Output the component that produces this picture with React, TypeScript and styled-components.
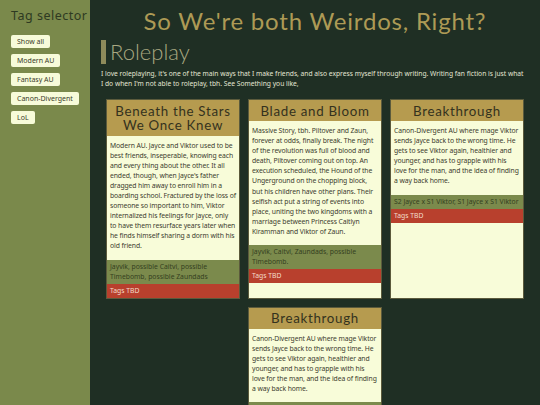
import React from 'react';
import styled, { createGlobalStyle } from 'styled-components';

const GlobalStyle = createGlobalStyle`
  html, body {
    margin: 0;
    padding: 0;
    height: 100%;
    overflow: hidden;
    background: #1f2f24;
    font-family: 'Noto Sans', 'Open Sans', sans-serif;
  }
  * { box-sizing: border-box; }
`;

const tags = ['Show all', 'Modern AU', 'Fantasy AU', 'Canon-Divergent', 'LoL'];

const stories = [
  {
    title: 'Beneath the Stars We Once Knew',
    body: "Modern AU. Jayce and Viktor used to be best friends, inseperable, knowing each and every thing about the other. It all ended, though, when Jayce's father dragged him away to enroll him in a boarding school. Fractured by the loss of someone so important to him, Viktor internalized his feelings for Jayce, only to have them resurface years later when he finds himself sharing a dorm with his old friend.",
    ships: 'Jayvik, possible Caitvi, possible Timebomb, possible Zaundads',
  },
  {
    title: 'Blade and Bloom',
    body: 'Massive Story, tbh. Piltover and Zaun, forever at odds, finally break. The night of the revolution was full of blood and death, Piltover coming out on top. An execution scheduled, the Hound of the Ungerground on the chopping block, but his children have other plans. Their selfish act put a string of events into place, uniting the two kingdoms with a marriage between Princess Caitlyn Kiramman and Viktor of Zaun.',
    ships: 'Jayvik, Caitvi, Zaundads, possible Timebomb.',
  },
  {
    title: 'Breakthrough',
    body: 'Canon-Divergent AU where mage Viktor sends Jayce back to the wrong time. He gets to see Viktor again, healthier and younger, and has to grapple with his love for the man, and the idea of finding a way back home.',
    ships: 'S2 Jayce x S1 Viktor, S1 Jayce x S1 Viktor',
  },
  {
    title: 'Breakthrough',
    body: 'Canon-Divergent AU where mage Viktor sends Jayce back to the wrong time. He gets to see Viktor again, healthier and younger, and has to grapple with his love for the man, and the idea of finding a way back home.',
    ships: 'S2 Jayce x S1 Viktor, S1 Jayce x S1 Viktor',
  },
];

export default function App() {
  return (
    <>
      <GlobalStyle />
      <Page>
        <Sidebar>
          <SideTitle>Tag selector</SideTitle>
          <TagList>
            {tags.map((t) => (
              <TagButton key={t}>{t}</TagButton>
            ))}
          </TagList>
        </Sidebar>
        <Main>
          <Title>So We're both Weirdos, Right?</Title>
          <Section>
            <SectionTitle>Roleplay</SectionTitle>
          </Section>
          <Intro>
            I love roleplaying, it's one of the main ways that I make friends, and also express myself through
            writing. Writing fan fiction is just what
            <br />I do when I'm not able to roleplay, tbh. See Something you like,
          </Intro>
          <Cards>
            {stories.map((s, i) => (
              <Card key={i}>
                <CardHead>{s.title}</CardHead>
                <CardBody>{s.body}</CardBody>
                <Ships>{s.ships}</Ships>
                <TagsRow>Tags TBD</TagsRow>
              </Card>
            ))}
          </Cards>
        </Main>
      </Page>
    </>
  );
}

const Page = styled.div`
  display: flex;
  height: 100vh;
`;

const Sidebar = styled.aside`
  width: 90px;
  flex-shrink: 0;
  background: #7a894b;
  padding: 7px 0 0 11px;
`;

const SideTitle = styled.div`
  font-family: 'Noto Sans', sans-serif;
  font-size: 12.5px;
  letter-spacing: 0.5px;
  color: #2e3a22;
  white-space: nowrap;
  margin-bottom: 11px;
`;

const TagList = styled.div`
  display: flex;
  flex-direction: column;
  align-items: flex-start;
  gap: 6px;
`;

const TagButton = styled.button`
  font-family: 'Noto Sans', sans-serif;
  font-size: 7px;
  line-height: 9px;
  color: #3a3c2a;
  background: #f7fbd9;
  border: none;
  border-radius: 2px;
  padding: 2px 6px;
`;

const Main = styled.main`
  flex: 1;
  padding: 6px 11px 0 11px;
  overflow: hidden;
`;

const Title = styled.h1`
  margin: 0;
  text-align: center;
  font-family: 'Lato', sans-serif;
  font-weight: 400;
  font-size: 24px;
  line-height: 30px;
  letter-spacing: 0.8px;
  color: #ad9a55;
`;

const Section = styled.div`
  display: flex;
  align-items: center;
  margin-top: 4px;
`;

const SectionTitle = styled.h2`
  margin: 0;
  border-left: 5px solid #8e8b5b;
  padding-left: 4px;
  font-family: 'Lato', sans-serif;
  font-weight: 300;
  font-size: 22px;
  line-height: 24px;
  color: #a9a881;
`;

const Intro = styled.p`
  margin: 5px 0 0 0;
  font-size: 6.7px;
  line-height: 10px;
  color: #e4e6d4;
`;

const Cards = styled.div`
  display: flex;
  flex-wrap: wrap;
  justify-content: center;
  gap: 8px;
  margin-top: 10px;
`;

const Card = styled.div`
  width: 134px;
  display: flex;
  flex-direction: column;
  background: #f8fcd9;
  border: 1px solid #5b5a3c;
`;

const CardHead = styled.div`
  background: #b69b4f;
  text-align: center;
  font-family: 'Lato', sans-serif;
  font-size: 13.3px;
  line-height: 14.5px;
  letter-spacing: 0.7px;
  color: #34321e;
  padding: 3.5px 4px 3px;
`;

const CardBody = styled.div`
  font-size: 6.8px;
  line-height: 10.1px;
  letter-spacing: -0.09px;
  color: #3b3b2d;
  padding: 5px 3px 8px;
`;

const Ships = styled.div`
  background: #7b8a4c;
  font-size: 6.8px;
  line-height: 10px;
  color: #34401f;
  padding: 2px 3px;
`;

const TagsRow = styled.div`
  background: #b8402d;
  font-size: 6.8px;
  line-height: 10px;
  color: #f3dcc9;
  padding: 2px 3px;
`;
